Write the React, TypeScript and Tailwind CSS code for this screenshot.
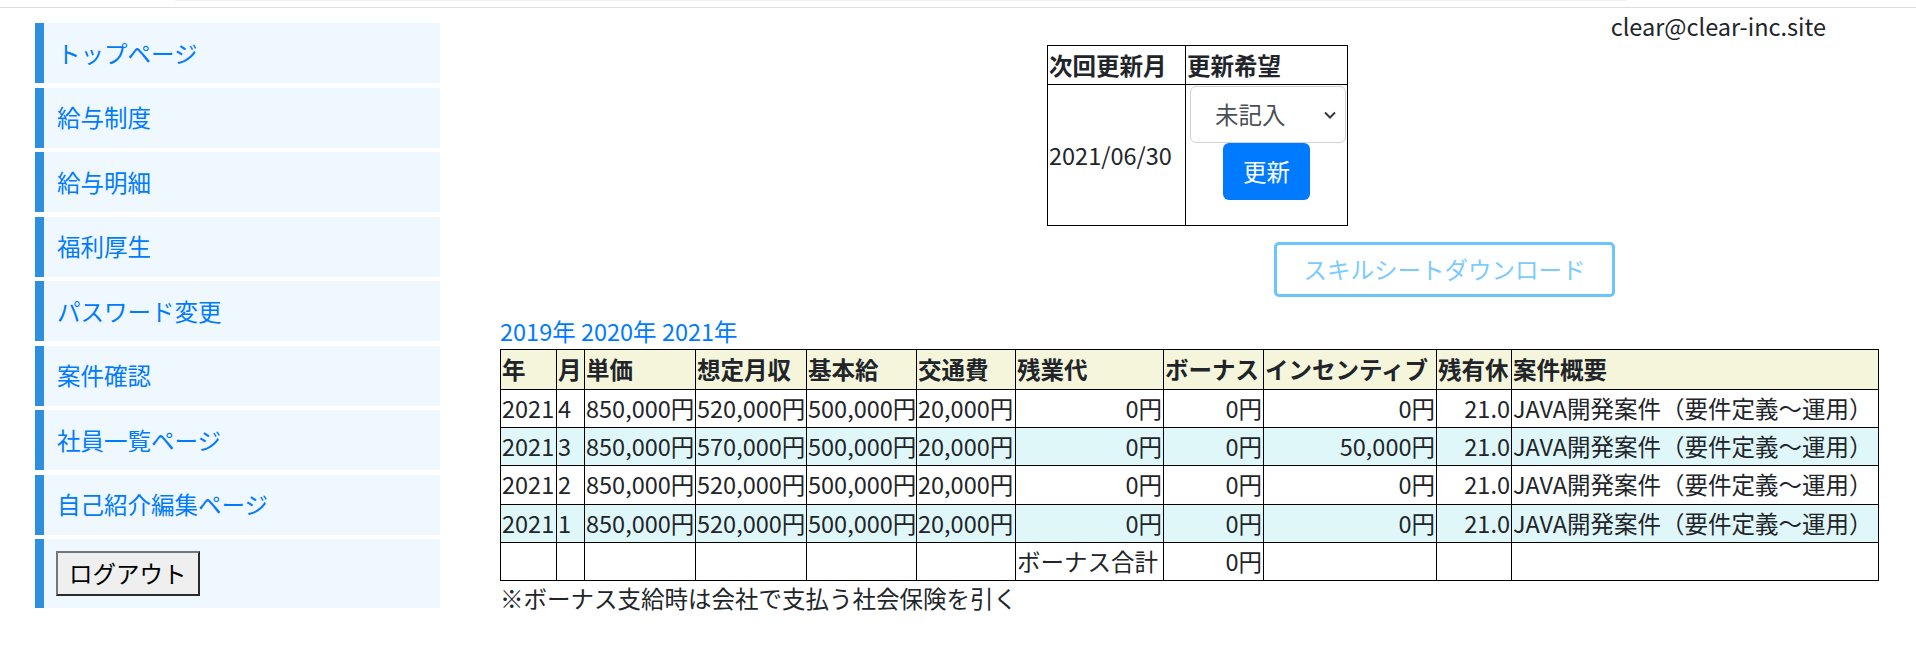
import React from "react"

const menuItems = [
  "トップページ",
  "給与制度",
  "給与明細",
  "福利厚生",
  "パスワード変更",
  "案件確認",
  "社員一覧ページ",
  "自己紹介編集ページ",
]

const rows = [
  { y: "2021", m: "4", tanka: "850,000円", sotei: "520,000円", kihon: "500,000円", kotsu: "20,000円", zangyo: "0円", bonus: "0円", incentive: "0円", kyuka: "21.0", gaiyo: "JAVA開発案件（要件定義～運用）" },
  { y: "2021", m: "3", tanka: "850,000円", sotei: "570,000円", kihon: "500,000円", kotsu: "20,000円", zangyo: "0円", bonus: "0円", incentive: "50,000円", kyuka: "21.0", gaiyo: "JAVA開発案件（要件定義～運用）" },
  { y: "2021", m: "2", tanka: "850,000円", sotei: "520,000円", kihon: "500,000円", kotsu: "20,000円", zangyo: "0円", bonus: "0円", incentive: "0円", kyuka: "21.0", gaiyo: "JAVA開発案件（要件定義～運用）" },
  { y: "2021", m: "1", tanka: "850,000円", sotei: "520,000円", kihon: "500,000円", kotsu: "20,000円", zangyo: "0円", bonus: "0円", incentive: "0円", kyuka: "21.0", gaiyo: "JAVA開発案件（要件定義～運用）" },
]

const headers = ["年", "月", "単価", "想定月収", "基本給", "交通費", "残業代", "ボーナス", "インセンティブ", "残有休", "案件概要"]
const colWidths = ["w-[56px]", "w-[28px]", "w-[111px]", "w-[111px]", "w-[110px]", "w-[99px]", "w-[148px]", "w-[100px]", "w-[173px]", "w-[75px]", "w-[367px]"]

const td = "border border-black px-[1px] py-0 whitespace-nowrap"

export default function App() {
  return (
    <div className="min-h-screen bg-white text-[#212529] font-['Noto_Sans_CJK_JP','Noto_Sans',sans-serif] text-[23.5px] leading-[35px]">
      {/* top lines */}
      <div className="h-[1px] ml-[175px] w-[1451px] bg-[#f0f0f0]" />
      <div className="h-[1px] mt-[6px] w-full bg-[#dedede]" />

      <div className="flex">
        {/* Sidebar */}
        <div className="ml-[35px] w-[405px] mt-[15px] flex flex-col gap-[4.5px] flex-shrink-0">
          {menuItems.map((item) => (
            <a
              key={item}
              href="#"
              className="h-[60px] flex items-center border-l-[9px] border-[#2f8fdd] bg-[#f0f8ff] pl-[13px] text-[#007bff]"
            >
              {item}
            </a>
          ))}
          <div className="h-[69px] flex items-center border-l-[9px] border-[#2f8fdd] bg-[#f0f8ff] pl-[12px]">
            <button className="h-[45px] px-[11px] bg-[#efefef] text-black border-2 border-t-[#767676] border-l-[#767676] border-r-[#2b2b2b] border-b-[#2b2b2b] leading-[35px]">
              ログアウト
            </button>
          </div>
        </div>

        {/* Main content */}
        <div className="ml-[60px] w-[1378px] pt-[1px]">
          <div className="flex justify-end pr-[52px] h-[36px]">
            <span>clear@clear-inc.site</span>
          </div>

          <table className="ml-[547px] border-collapse">
            <thead>
              <tr className="h-[39px]">
                <th className={`${td} w-[138px] text-left font-bold`}>次回更新月</th>
                <th className={`${td} w-[162px] text-left font-bold`}>更新希望</th>
              </tr>
            </thead>
            <tbody>
              <tr>
                <td className={`${td} align-middle`}>2021/06/30</td>
                <td className={`${td} py-[1px] align-top`}>
                  <div className="flex flex-col items-center mb-[24px]">
                    <div className="relative w-[156px] ml-[3px]">
                      <select className="appearance-none w-full h-[57px] border border-[#ced4da] rounded-[6px] bg-white text-[#495057] pl-[24px] pr-[30px] outline-none">
                        <option>未記入</option>
                      </select>
                      <svg className="absolute right-[9px] top-[24px] pointer-events-none" width="14" height="10" viewBox="0 0 14 10">
                        <path d="M2 2.5 L7 7.5 L12 2.5" fill="none" stroke="#343a40" strokeWidth="2" />
                      </svg>
                    </div>
                    <button className="w-[87px] h-[57px] rounded-[6px] bg-[#007bff] text-white">更新</button>
                  </div>
                </td>
              </tr>
            </tbody>
          </table>

          <div className="mt-[16px] ml-[774px]">
            <button className="w-[341px] h-[55px] border-[3px] border-[#6cc4ff] rounded-[5px] text-[#7ccbff] bg-white">
              スキルシートダウンロード
            </button>
          </div>

          <div className="mt-[17px] text-[#007bff] h-[35px]">
            <a href="#">2019年</a> <a href="#">2020年</a> <a href="#">2021年</a>
          </div>

          <table className="table-fixed border-collapse w-[1378px]">
            <colgroup>
              {colWidths.map((w, i) => (
                <col key={i} className={w} />
              ))}
            </colgroup>
            <thead>
              <tr className="h-[39.5px] bg-[#f5f5dc]">
                {headers.map((h) => (
                  <th key={h} className={`${td} text-left font-bold`}>
                    {h}
                  </th>
                ))}
              </tr>
            </thead>
            <tbody>
              {rows.map((r, i) => (
                <tr key={r.m} className={`h-[38.4px] ${i % 2 === 1 ? "bg-[#e0f7fa]" : "bg-white"}`}>
                  <td className={td}>{r.y}</td>
                  <td className={td}>{r.m}</td>
                  <td className={td}>{r.tanka}</td>
                  <td className={td}>{r.sotei}</td>
                  <td className={td}>{r.kihon}</td>
                  <td className={td}>{r.kotsu}</td>
                  <td className={`${td} text-right`}>{r.zangyo}</td>
                  <td className={`${td} text-right`}>{r.bonus}</td>
                  <td className={`${td} text-right`}>{r.incentive}</td>
                  <td className={`${td} text-right`}>{r.kyuka}</td>
                  <td className={td}>{r.gaiyo}</td>
                </tr>
              ))}
              <tr className="h-[38.4px]">
                <td className={td}></td>
                <td className={td}></td>
                <td className={td}></td>
                <td className={td}></td>
                <td className={td}></td>
                <td className={td}></td>
                <td className={td}>ボーナス合計</td>
                <td className={`${td} text-right`}>0円</td>
                <td className={td}></td>
                <td className={td}></td>
                <td className={td}></td>
              </tr>
            </tbody>
          </table>

          <div>※ボーナス支給時は会社で支払う社会保険を引く</div>
        </div>
      </div>
    </div>
  )
}
